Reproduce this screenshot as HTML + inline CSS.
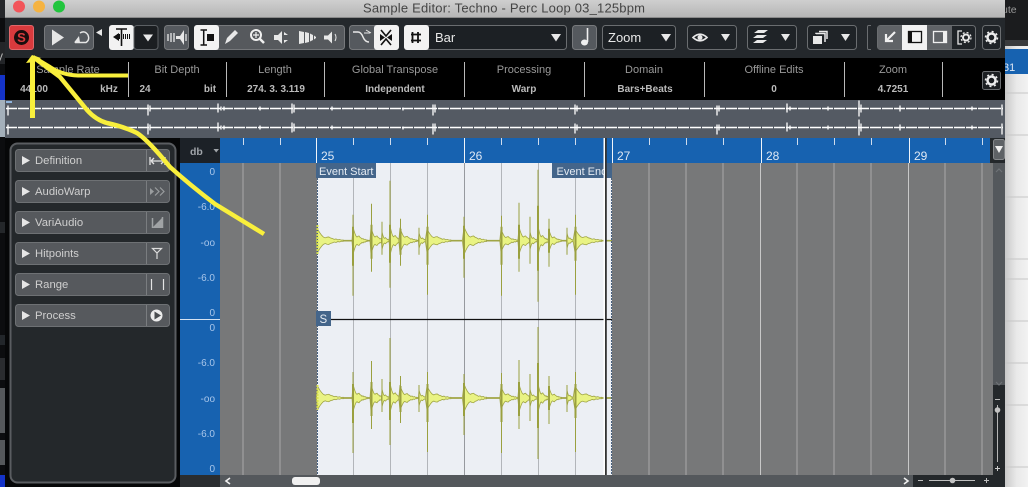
<!DOCTYPE html>
<html><head><meta charset="utf-8"><style>
html,body{margin:0;padding:0;background:#000}
body{width:1028px;height:487px;overflow:hidden;position:relative}
svg{display:block}
text{font-family:"Liberation Sans",sans-serif}
.l{font-size:11px;fill:#999;text-anchor:middle}
.v{font-size:10px;font-weight:bold;fill:#bbb;text-anchor:middle}
.b{font-size:11.3px;fill:#cfcfcf}
.d{font-size:10px;fill:#a9c6ea;text-anchor:end}
.r{font-size:12px;fill:#dfe8f4}
.e{font-size:11px;fill:#e6ecf3}
.wfs use{fill:#e9f383;stroke:#a0a545;stroke-width:.8}
</style></head><body>
<svg width="1028" height="487" viewBox="0 0 1028 487" xmlns="http://www.w3.org/2000/svg">
<defs>
<linearGradient id="tb" x1="0" y1="0" x2="0" y2="1"><stop offset="0" stop-color="#cfcfcf"/><stop offset="1" stop-color="#b4b4b4"/></linearGradient>
<linearGradient id="rs" x1="0" y1="0" x2="1" y2="0"><stop offset="0" stop-color="#c9c9c9"/><stop offset=".5" stop-color="#e9e9e9"/><stop offset="1" stop-color="#f2f2f2"/></linearGradient>
<path id="bd" vector-effect="non-scaling-stroke" d="M-1 0L0 -1L1 -.72L2 -.5L3 -.33L4 -.26L5 -.32L6 -.34L7 -.24L8 -.2L9 -.12L10 -.16L11 -.08L12 -.11L13 -.05L14 -.06L14 .06L13 .05L12 .11L11 .08L10 .16L9 .12L8 .2L7 .24L6 .34L5 .32L4 .26L3 .33L2 .5L1 .72L0 1Z"/>
<g id="wave">
 <path d="M317 0H612" stroke="#a0a545" stroke-width="1.700" fill="none"/>
 <g class="wfs">
 <use href="#bd" transform="translate(318,0) scale(1.800,11)"/>
 <use href="#bd" transform="translate(353,0) scale(1,14)"/>
 <use href="#bd" transform="translate(371,0) scale(1,14)"/>
 <use href="#bd" transform="translate(382,0) scale(.6,9)"/>
 <use href="#bd" transform="translate(390,0) scale(.9,15)"/>
 <use href="#bd" transform="translate(400,0) scale(1.200,13)"/>
 <use href="#bd" transform="translate(419,0) scale(.6,8)"/>
 <use href="#bd" transform="translate(427,0) scale(1.700,12)"/>
 <use href="#bd" transform="translate(464,0) scale(1.600,14)"/>
 <use href="#bd" transform="translate(501,0) scale(1.200,12)"/>
 <use href="#bd" transform="translate(519,0) scale(1.100,14)"/>
 <use href="#bd" transform="translate(530,0) scale(.6,9)"/>
 <use href="#bd" transform="translate(538,0) scale(.8,15)"/>
 <use href="#bd" transform="translate(549,0) scale(.9,11)"/>
 <use href="#bd" transform="translate(567,0) scale(.5,8)"/>
 <use href="#bd" transform="translate(575,0) scale(1.900,12)"/>
 </g>
 <path fill="none" stroke="#9aa03f" stroke-width="1" d="M353 -26V55M371.500 -37V31M382 -19V14M390 -60V47M400.500 -22V25M419 -13V14M427.500 -26V54M464 -24V37M501.500 -25V55M519 -38V31M530 -24V23M538 -71V61M549 -22V26M567 -13V14M575.500 -26V54"/>
 <path fill="none" stroke="#9aa03f" stroke-width="2" d="M353 -14V25M371.500 -16V18M390 -16V22M400.500 -12V14M427.500 -14V24M464 -15V18M501.500 -14V24M519 -16V18M538 -35V30M549 -12V12M575.500 -14V20"/>
</g>
<g id="ov">
 <path d="M6 0H1003" stroke="#fff" stroke-width="1.600" stroke-dasharray="11 1" fill="none"/>
 <path d="M8 -3V7M148 -4V7M150 -3V3M218 -5V4M221 -2V2M224 -2V2M260 -2V2M292 -5V5M294 -4V4M332 -2V2M403 -1V2M433 -4V7M435 -4V4M575 -4V6M577 -3V3M717 -3V7M719 -3V3M787 -5V4M790 -2V2M828 -2V2M859 -8V8M861 -4V4M900 -3V3M972 -2V2M1002 -4V7" stroke="#fff" stroke-width="1.300" fill="none"/>
</g>
</defs>

<!-- outside left -->
<rect width="5" height="487" fill="#0c0d0f"/>
<rect y="0" width="5" height="18" fill="#26282b"/>
<rect y="42" width="5" height="22" fill="#232528"/>
<rect y="75" width="5" height="27" fill="#1433c8"/>
<rect y="100" width="5" height="37" fill="#a4b0ba"/>
<rect y="222" width="5" height="11" fill="#24272a"/>
<rect y="335" width="5" height="10" fill="#22262a"/>
<rect y="358" width="5" height="22" fill="#2a2c2f"/>
<rect y="388" width="5" height="45" fill="#55585b"/>
<rect y="440" width="5" height="25" fill="#55585b"/>
<rect y="475" width="5" height="12" fill="#1433c8"/>
<text x="-3" y="60" font-size="12" fill="#b8b8b8">y</text>

<!-- outside right -->
<rect x="1005" width="23" height="487" fill="url(#rs)"/>
<rect x="1005" y="0" width="23" height="40" fill="#1b1c1e"/>
<rect x="1005" y="40" width="23" height="6" fill="#3a3b3d"/>
<rect x="1005" y="49" width="23" height="25" fill="#1762b0"/>
<text x="1002" y="13" font-size="10.500" fill="#9a9a9a">ute</text>
<text x="1003" y="71" font-size="11" fill="#dfe8f4">31</text>
<path d="M1005 93H1028M1005 135H1028M1005 197H1028M1005 259H1028M1005 279H1028M1005 321H1028M1005 363H1028M1005 405H1028M1005 467H1028" stroke="#c6c6c6" stroke-width="1"/>

<!-- window -->
<rect x="5" width="1000" height="18" fill="url(#tb)"/>
<rect x="5" y="17" width="1000" height="1" fill="#8a8a8a"/>
<circle cx="19" cy="6.500" r="6" fill="#f2555a"/>
<circle cx="39" cy="6.500" r="6" fill="#f5b342"/>
<circle cx="59" cy="6.500" r="6" fill="#22c53e"/>
<text x="504" y="12.500" font-size="13" fill="#444" text-anchor="middle" textLength="282">Sample Editor: Techno - Perc Loop 03_125bpm</text>

<rect x="5" y="18" width="1000" height="40" fill="#24282c"/>
<rect x="5" y="58" width="1000" height="42" fill="#000"/>
<rect x="5" y="100" width="1000" height="38" fill="#545a63"/>
<rect x="5" y="138" width="1000" height="349" fill="#060708"/>

<!-- toolbar -->
<rect x="9.500" y="25.500" width="24" height="24" rx="2.500" fill="#d93a3d" stroke="#e2676a"/>
<circle cx="21.500" cy="37.500" r="7.500" fill="#1a0e0e"/>
<text x="21.500" y="42" font-size="13" font-weight="bold" fill="#d93a3d" text-anchor="middle">S</text>

<rect x="44.500" y="25.500" width="49" height="24" rx="3" fill="#55595e" stroke="#77797c"/>
<path d="M52 29.500L64 37.500L52 45.500Z" fill="#e6e6e6"/>
<path d="M75 42.500H86Q90 40 88 35Q85 30 80 33" fill="none" stroke="#e6e6e6" stroke-width="1.400"/><path d="M79 36L74 42.500H80Z" fill="#e6e6e6"/>
<path d="M102 29V36L96 32.500Z" fill="#e6e6e6"/>

<rect x="109" y="25" width="25" height="25" rx="3" fill="#f2f2f2"/>
<rect x="134" y="25.500" width="24" height="24" rx="3" fill="#1b1e21" stroke="#5c6064"/>
<path d="M113 37L119 33V41Z" fill="#111"/><path d="M116 29H127M121.500 29V46" stroke="#111" stroke-width="1.600"/><path d="M117 36.500H130" stroke="#111" stroke-width="5" stroke-dasharray="1 1"/>
<path d="M143 34.500H153L148 41.500Z" fill="#e8e8e8"/>

<rect x="164.500" y="25.500" width="24" height="24" rx="3" fill="#55595e" stroke="#77797c"/>
<path d="M176 36H180L184 30V45L180 39H176Z" fill="#e8e8e8"/><path d="M168 34V41M171 33V42M174 33V42M186 34V41" stroke="#e8e8e8" stroke-width="1.300"/>

<rect x="194.500" y="25.500" width="150" height="24" rx="3" fill="#56595d" stroke="#77797c"/>
<rect x="194" y="25" width="25" height="25" rx="3" fill="#f2f2f2"/>
<path d="M200.500 30H207M203.700 30V45M200.500 45H207" stroke="#111" stroke-width="1.500" fill="none"/><rect x="207" y="34" width="7" height="7" fill="#111"/>
<path d="M225 44L227 38L235 30L238 33L230 41Z" fill="#e8e8e8"/>
<circle cx="256" cy="35" r="5" fill="none" stroke="#f0f0f0" stroke-width="2"/><path d="M260 39L264 43" stroke="#f0f0f0" stroke-width="2.500"/><path d="M253 35H259M256 32V38" stroke="#f0f0f0" stroke-width="1.200"/>
<path d="M274 35H278L282 31V44L278 40H274Z" fill="#e8e8e8"/><path d="M284 32L288 35H284ZM284 43L288 40H284Z" fill="#e8e8e8"/>
<path d="M299 31L304 32V43L299 44ZM305 32L309 33V42L305 43ZM310 33.500L313 35V40L310 41.500ZM314 35.500L316 37V38L314 39.500Z" fill="#e8e8e8"/>
<path d="M324 35.500H328L332 31.500V43.500L328 39.500H324Z" fill="#e8e8e8"/><path d="M335 34Q337 37.500 335 41" stroke="#e8e8e8" fill="none"/>

<rect x="349.500" y="25.500" width="49" height="24" rx="3" fill="#55595e" stroke="#77797c"/>
<rect x="374" y="25" width="25" height="25" rx="3" fill="#f2f2f2"/>
<path d="M353 32H358Q361 32 363 37Q365 42 369 42" fill="none" stroke="#e8e8e8" stroke-width="1.500"/><path d="M364 33H370M366 30L371 33" stroke="#e8e8e8"/>
<path d="M381 30L386 36L391 30M381 45L386 39L391 45" fill="none" stroke="#111" stroke-width="1.600"/><path d="M380 34L385 37.500L380 41ZM392 34L387 37.500L392 41Z" fill="#111"/>

<rect x="404.500" y="25.500" width="162" height="24" rx="3" fill="#1c2024" stroke="#6a6d70"/>
<rect x="404" y="25" width="25" height="25" rx="3" fill="#f2f2f2"/>
<path d="M412.500 32V43M418 32V43M411 34.500H421M411 40.500H421" stroke="#111" stroke-width="1.800"/>
<text x="435" y="42" font-size="13" fill="#e8e8e8">Bar</text>
<path d="M551 34H561L556 41.500Z" fill="#e8e8e8"/>

<rect x="572.500" y="25.500" width="24" height="24" rx="3" fill="#55595e" stroke="#77797c"/>
<path d="M587.500 28V42" stroke="#f0f0f0" stroke-width="1.600"/><ellipse cx="584.500" cy="42.500" rx="3.500" ry="3" fill="#f0f0f0"/>

<rect x="602.500" y="25.500" width="73" height="24" rx="3" fill="#1c2024" stroke="#6a6d70"/>
<text x="608" y="42" font-size="13" fill="#e8e8e8">Zoom</text>
<path d="M661 34H671L666 41.500Z" fill="#e8e8e8"/>

<rect x="687.500" y="25.500" width="49" height="24" rx="3" fill="#1f2327" stroke="#6a6d70"/>
<path d="M693 37.500Q700 31 707 37.500Q700 44 693 37.500Z" fill="none" stroke="#e8e8e8" stroke-width="1.600"/><circle cx="700" cy="37.500" r="2.500" fill="#e8e8e8"/>
<path d="M721 34H730L725.500 41Z" fill="#e8e8e8"/>

<rect x="747.500" y="25.500" width="49" height="24" rx="3" fill="#1f2327" stroke="#6a6d70"/>
<path d="M754 33L758 30H768L764 33ZM753 38L757 35H767L763 38ZM753 43L757 40H767L763 43Z" fill="#e8e8e8"/>
<path d="M781 34H790L785.500 41Z" fill="#e8e8e8"/>

<rect x="807.500" y="25.500" width="49" height="24" rx="3" fill="#1f2327" stroke="#6a6d70"/>
<rect x="813" y="36" width="9" height="8" fill="#e8e8e8"/><path d="M816 34V33.500H825V42M819 31.500H827V39" stroke="#e8e8e8" stroke-width="1.500" fill="none"/>
<path d="M841 34H850L845.500 41Z" fill="#e8e8e8"/>

<path d="M871 25.500H868.500Q867.500 25.500 867.500 27V48Q867.500 49.500 868.500 49.500H871" fill="none" stroke="#6a6d70"/>

<rect x="877.500" y="25.500" width="98" height="24" rx="3" fill="#1f2327" stroke="#6a6d70"/>
<rect x="878" y="26" width="24" height="23" fill="#606367"/>
<rect x="902" y="25" width="25" height="25" fill="#f2f2f2"/>
<rect x="927" y="26" width="25" height="23" fill="#606367"/>
<path d="M895 32L886 41M886 34V41H893" fill="none" stroke="#f0f0f0" stroke-width="2.200"/>
<rect x="908.500" y="31.500" width="13" height="11" fill="none" stroke="#111" stroke-width="1.300"/><rect x="908" y="31" width="4" height="12" fill="#111"/>
<rect x="933.500" y="31.500" width="13" height="11" fill="none" stroke="#f0f0f0" stroke-width="1.300"/><rect x="943" y="31" width="4" height="12" fill="#f0f0f0"/>
<path d="M962 31H958V44H962" fill="none" stroke="#e8e8e8" stroke-width="1.300"/><circle cx="966" cy="37.500" r="3" fill="none" stroke="#e8e8e8" stroke-width="2"/><circle cx="966" cy="37.500" r="5" fill="none" stroke="#e8e8e8" stroke-width="1.300" stroke-dasharray="2 2"/>

<rect x="982.500" y="25.500" width="18" height="24" rx="3" fill="#1f2327" stroke="#6a6d70"/>
<circle cx="991.500" cy="37.500" r="4" fill="none" stroke="#eee" stroke-width="2.500"/><circle cx="991.500" cy="37.500" r="6" fill="none" stroke="#eee" stroke-width="1.500" stroke-dasharray="2 2.700"/>

<!-- info line -->
<path d="M128.500 62V97M226.500 62V97M324.500 62V97M464.500 62V97M584.500 62V97M704.500 62V97M844.500 62V97M942.500 62V97" stroke="#b9b9b9" stroke-width="1"/>
<text class="l" x="68" y="73">Sample Rate</text>
<text class="l" x="177" y="73">Bit Depth</text>
<text class="l" x="275" y="73">Length</text>
<text class="l" x="395" y="73">Global Transpose</text>
<text class="l" x="524" y="73">Processing</text>
<text class="l" x="644" y="73">Domain</text>
<text class="l" x="774" y="73">Offline Edits</text>
<text class="l" x="893" y="73">Zoom</text>
<text class="v" x="34" y="92">44100</text>
<text class="v" x="109" y="92">kHz</text>
<text class="v" x="145" y="92">24</text>
<text class="v" x="210" y="92">bit</text>
<text class="v" x="276" y="92">274. 3. 3.119</text>
<text class="v" x="395" y="92">Independent</text>
<text class="v" x="524" y="92">Warp</text>
<text class="v" x="645" y="92">Bars+Beats</text>
<text class="v" x="774" y="92">0</text>
<text class="v" x="893" y="92">4.7251</text>
<rect x="982.500" y="71.500" width="18" height="18" rx="2" fill="#1c1f22" stroke="#6a6d70"/>
<circle cx="991.500" cy="80.500" r="4" fill="none" stroke="#eee" stroke-width="2.500"/><circle cx="991.500" cy="80.500" r="6" fill="none" stroke="#eee" stroke-width="1.500" stroke-dasharray="2 2.700"/>

<!-- overview -->
<rect x="6" y="101" width="6" height="2" fill="#8fb4dc"/>
<use href="#ov" transform="translate(0,108.500)"/>
<use href="#ov" transform="translate(0,127.500)"/>

<!-- editor -->
<rect x="180" y="138" width="40" height="25" fill="#1c2127"/>
<text x="190" y="155" font-size="10.500" font-weight="bold" fill="#a0a4a9">db</text>
<path d="M213.500 149H219L216.200 152.500Z" fill="#a0a4a9"/>
<rect x="180" y="163" width="40" height="312" fill="#1762b0"/>
<rect x="180" y="319" width="40" height="1" fill="#d5e2f2"/>
<g class="d">
<text x="215" y="175">0</text><text x="215" y="210">-6.0</text><text x="215" y="246">-oo</text><text x="215" y="281">-6.0</text><text x="215" y="316">0</text>
<text x="215" y="331">0</text><text x="215" y="366">-6.0</text><text x="215" y="402">-oo</text><text x="215" y="437">-6.0</text><text x="215" y="472">0</text>
</g>
<rect x="220" y="138" width="770" height="25" fill="#1762b0"/>
<rect x="220" y="163" width="773" height="312" fill="#777879"/>
<rect x="317" y="163" width="295" height="312" fill="#eceff4"/>
<path d="M243 163V475M280 163V475M649 163V475M686 163V475M723 163V475M797 163V475M834 163V475M871 163V475M945 163V475M982 163V475" stroke="#a9a9a9" stroke-width="1"/>
<path d="M760.500 163V475M908.500 163V475" stroke="#c8c8c8" stroke-width="1"/>
<path d="M353.500 163V475M390.500 163V475M427.500 163V475M501.500 163V475M538.500 163V475M575.500 163V475" stroke="#b2b5ba" stroke-width="1"/>
<path d="M464.500 163V475" stroke="#96999e" stroke-width="1"/>
<!-- ruler ticks -->
<path d="M243.500 138V145M280.500 138V145M353.500 138V145M390.500 138V145M427.500 138V145M501.500 138V145M538.500 138V145M575.500 138V145M649.500 138V145M686.500 138V145M723.500 138V145M797.500 138V145M834.500 138V145M871.500 138V145M945.500 138V145M982.500 138V145" stroke="#cfdcec" stroke-width="1"/>
<path d="M316.500 138V163M464.500 138V163M612.500 138V163M761.500 138V163M909.500 138V163" stroke="#f0f4f9" stroke-width="1"/>
<text class="r" x="321" y="160">25</text><text class="r" x="469" y="160">26</text><text class="r" x="617" y="160">27</text><text class="r" x="766" y="160">28</text><text class="r" x="914" y="160">29</text>

<use href="#wave" transform="translate(0,240.700)"/>
<use href="#wave" transform="translate(0,398)"/>
<path d="M317.500 163V475M611.500 163V475" stroke="#47607f" stroke-width="1" stroke-dasharray="2 1"/>
<path d="M317.500 225V255M317.500 385V410" stroke="#d9e24d" stroke-width="2" stroke-dasharray="2 1"/>

<rect x="316" y="163" width="60" height="15" fill="#44658a"/>
<text class="e" x="319" y="175">Event Start</text>
<rect x="552" y="163" width="60" height="15" fill="#44658a"/>
<text class="e" x="556.500" y="175">Event End</text>
<path d="M331 319.500H612" stroke="#111" stroke-width="1.200"/>
<rect x="316" y="311" width="15" height="15" fill="#44658a"/>
<text x="319.500" y="323" font-size="11.500" fill="#e6ecf3">S</text>
<rect x="603.500" y="138" width="1.500" height="337" fill="#fff"/>
<rect x="605" y="138" width="1.800" height="337" fill="#333"/>

<!-- right scroll -->
<rect x="990" y="138" width="15" height="25" fill="#24282b"/>
<rect x="993" y="163" width="12" height="324" fill="#24282b"/>
<rect x="993" y="163" width="12" height="222" fill="#54585c"/>
<rect x="993.500" y="139.500" width="11" height="20" rx="2" fill="#5e6266" stroke="#85888b"/>
<path d="M995 146H1003L999 153Z" fill="#f0f0f0"/>
<path d="M996 172L999 169L1002 172M996 382L999 385L1002 382" fill="none" stroke="#6e7276" stroke-width="1.200"/>
<path d="M995 399.500H1000" stroke="#bbb"/><path d="M997.500 405V462" stroke="#b5b5b5"/><circle cx="997.500" cy="410" r="2.800" fill="#c3c3c3"/>
<path d="M995 468.500H1000M997.500 466V471" stroke="#ccc"/>

<!-- bottom scroll -->
<rect x="180" y="475" width="40" height="12" fill="#2a2d30"/>
<rect x="220" y="475" width="693" height="12" fill="#54585c"/>
<rect x="913" y="475" width="92" height="12" fill="#24282b"/>
<path d="M230 478L226 481L230 484" fill="none" stroke="#f0f0f0" stroke-width="1.600"/>
<rect x="292" y="477" width="28" height="8" rx="3" fill="#f0f0f0"/>
<path d="M904 478L908 481L904 484" fill="none" stroke="#f0f0f0" stroke-width="1.600"/>
<path d="M918 480.500H923M929 480.500H975M984 480.500H989M986.500 478V483" stroke="#c0c0c0"/>
<circle cx="952.500" cy="480.500" r="2.800" fill="#c3c3c3"/>

<!-- sidebar -->
<rect x="10.500" y="143.500" width="165" height="339" rx="7" fill="#24282b" stroke="#5a5d61" stroke-width="2"/>
<g>
<rect x="15.500" y="149.500" width="154" height="22" rx="3" fill="#56595d" stroke="#6e7174"/>
<rect x="15.500" y="180.500" width="154" height="22" rx="3" fill="#56595d" stroke="#6e7174"/>
<rect x="15.500" y="211.500" width="154" height="22" rx="3" fill="#56595d" stroke="#6e7174"/>
<rect x="15.500" y="242.500" width="154" height="22" rx="3" fill="#56595d" stroke="#6e7174"/>
<rect x="15.500" y="273.500" width="154" height="22" rx="3" fill="#56595d" stroke="#6e7174"/>
<rect x="15.500" y="304.500" width="154" height="22" rx="3" fill="#56595d" stroke="#6e7174"/>
<path d="M146.500 150V171M146.500 181V202M146.500 212V233M146.500 243V264M146.500 274V295M146.500 305V326" stroke="#7a7d80"/>
<path d="M22 156V165L30 160.500ZM22 187V196L30 191.500ZM22 218V227L30 222.500ZM22 249V258L30 253.500ZM22 280V289L30 284.500ZM22 311V320L30 315.500Z" fill="#e6e6e6"/>
</g>
<text class="b" x="35" y="164">Definition</text>
<text class="b" x="35" y="195">AudioWarp</text>
<text class="b" x="35" y="226">VariAudio</text>
<text class="b" x="35" y="257">Hitpoints</text>
<text class="b" x="35" y="288">Range</text>
<text class="b" x="35" y="319">Process</text>
<path d="M150 157V165M165 157V165M151 161H164M151 161L154 158M151 161L154 164M164 161L161 158M164 161L161 164" fill="none" stroke="#e4e4e4" stroke-width="1.300"/>
<path d="M150 188L154 191.500L150 195Z" fill="#9a9d9f"/><path d="M155 187.500L159 191.500L155 195.500M160 187.500L164 191.500L160 195.500" fill="none" stroke="#9a9d9f" stroke-width="1.200"/>
<path d="M152.500 218V228M162.500 217V228" fill="none" stroke="#a0a3a5" stroke-width="1.500"/><path d="M152 228L162 218V228Z" fill="#a0a3a5"/>
<path d="M152.500 248.500H161.500L157 253ZM157 253V259" fill="none" stroke="#dcdcdc" stroke-width="1.200"/>
<path d="M151.500 279V290M163.500 279V290" stroke="#e4e4e4" stroke-width="1.200"/>
<circle cx="156.500" cy="315.500" r="6" fill="#ececec"/><path d="M154.500 311.500V319.500L161 315.500Z" fill="#4a4d50"/>

<!-- yellow annotations -->
<g fill="none" stroke="#f9ef3c" stroke-linecap="butt" stroke-linejoin="round">
<path d="M32.500 118V60" stroke-width="5"/>
<path d="M128 75.500H78Q62 75 50 67L35 58" stroke-width="4"/>
<path d="M33 57L60 77L87 110Q96 120 107 123Q125 127 137 133Q148 140 170 167Q190 185 215 204L264 234" stroke-width="4.500"/>
</g>
<path d="M26 63L32 55L41 58L34 62Z" fill="#f9ef3c"/>
</svg>
</body></html>
